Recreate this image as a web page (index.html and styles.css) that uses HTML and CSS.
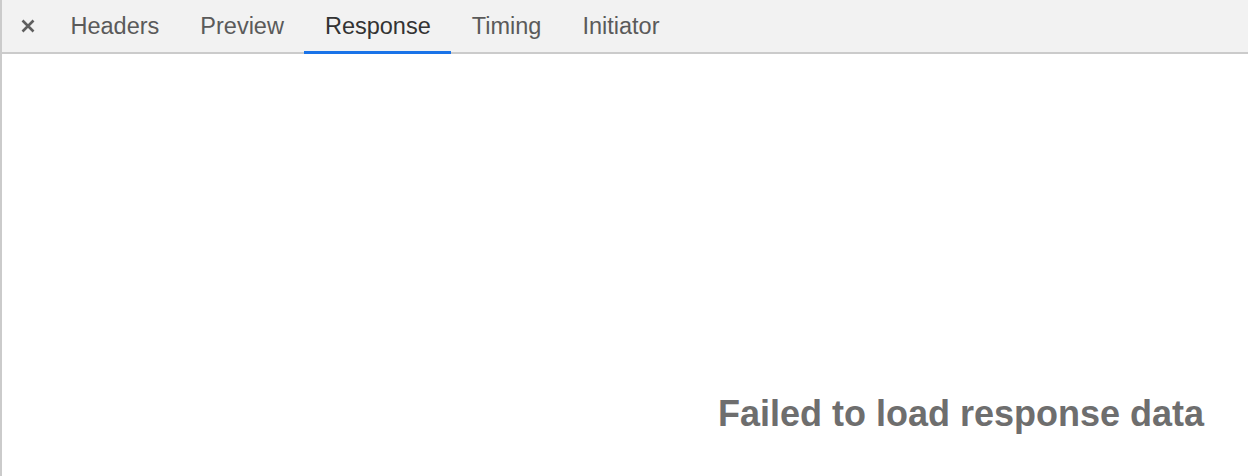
FILE: index.html
```html
<!DOCTYPE html>
<html>
<head>
<meta charset="utf-8">
<link rel="stylesheet" href="styles.css">
</head>
<body>
<div class="panel">
  <div class="tabbar">
    <div class="close" aria-label="Close">
      <svg width="14" height="14" viewBox="0 0 14 14"><path d="M1.5 1.5 L12.5 12.5 M12.5 1.5 L1.5 12.5" stroke="#5f5f5f" stroke-width="2.6" stroke-linecap="butt" fill="none"/></svg>
    </div>
    <div class="tab">Headers</div>
    <div class="tab">Preview</div>
    <div class="tab active">Response</div>
    <div class="tab">Timing</div>
    <div class="tab">Initiator</div>
  </div>
  <div class="content">
    <div class="message">Failed to load response data</div>
  </div>
</div>
</body>
</html>
```
FILE: styles.css
```css
html, body {
  margin: 0;
  padding: 0;
  background: #ffffff;
}
.panel {
  height: 476px;
  border-left: 2px solid #cbcbcb;
  display: flex;
  flex-direction: column;
  font-family: "Liberation Sans", Arial, sans-serif;
}
.tabbar {
  height: 52px;
  background: #f2f2f2;
  border-bottom: 2px solid #cbcbcb;
  display: flex;
  align-items: stretch;
}
.close {
  display: flex;
  align-items: center;
  padding: 0 15px 0 19px;
  margin-top: -1px;
}
.tab {
  display: flex;
  align-items: center;
  padding: 0 20.5px;
  font-size: 23.5px;
  color: #5a5a5a;
  position: relative;
  padding-top: 1px;
}
.tab.active {
  color: #333333;
}
.tab.active::after {
  content: "";
  position: absolute;
  left: 0;
  right: 0;
  bottom: -2px;
  height: 3px;
  background: #1a73e8;
}
.content {
  flex: 1;
  display: flex;
  justify-content: flex-end;
  align-items: flex-end;
  padding: 0 44px 41px 0;
}
.message {
  font-size: 36px;
  font-weight: bold;
  color: #6e6e6e;
}
```
